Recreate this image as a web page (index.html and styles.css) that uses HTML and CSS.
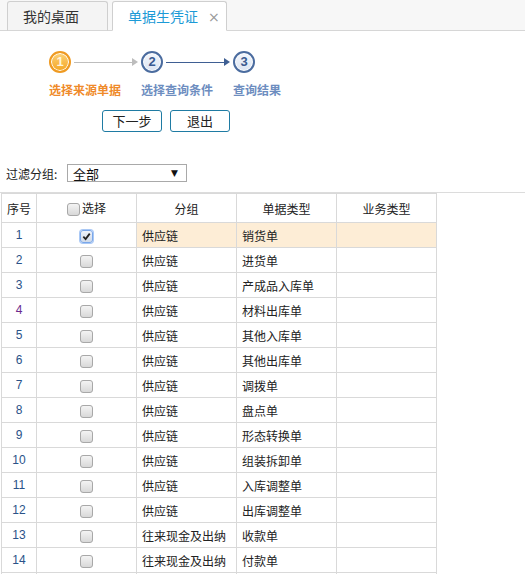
FILE: index.html
```html
<!DOCTYPE html>
<html lang="zh">
<head>
<meta charset="utf-8">
<title>单据生凭证</title>
<link rel="stylesheet" href="styles.css">
</head>
<body>
<div class="tabbar">
  <div class="tab">我的桌面</div>
  <div class="tab active">单据生凭证<span class="close">×</span></div>
</div>

<div class="steps">
  <div class="step">
    <div class="step-top">
      <span class="circle done">1</span>
      <span class="arrow gray"></span>
    </div>
    <div class="label orange">选择来源单据</div>
  </div>
  <div class="step">
    <div class="step-top">
      <span class="circle">2</span>
      <span class="arrow blue"></span>
    </div>
    <div class="label">选择查询条件</div>
  </div>
  <div class="step">
    <div class="step-top">
      <span class="circle">3</span>
    </div>
    <div class="label">查询结果</div>
  </div>
</div>

<div class="actions">
  <button class="btn">下一步</button>
  <button class="btn">退出</button>
</div>

<div class="filter">
  <span class="filter-label">过滤分组:</span>
  <div class="select"><span>全部</span><span class="caret">▼</span></div>
</div>

<div class="grid-wrap">
  <table class="grid">
    <colgroup>
      <col class="c-no">
      <col class="c-sel">
      <col class="c-grp">
      <col class="c-type">
      <col class="c-biz">
    </colgroup>
    <thead>
      <tr>
        <th>序号</th>
        <th><span class="cb"></span>选择</th>
        <th>分组</th>
        <th>单据类型</th>
        <th>业务类型</th>
      </tr>
    </thead>
    <tbody>
      <tr class="selected"><td class="no">1</td><td class="sel"><span class="cb checked"><svg viewBox="0 0 10 10" width="9" height="9"><path d="M1.5 5.2 L4 7.8 L8.6 1.8" fill="none" stroke="#222" stroke-width="2"/></svg></span></td><td class="hl">供应链</td><td class="hl">销货单</td><td class="hl"></td></tr>
      <tr><td class="no">2</td><td class="sel"><span class="cb"></span></td><td>供应链</td><td>进货单</td><td></td></tr>
      <tr><td class="no">3</td><td class="sel"><span class="cb"></span></td><td>供应链</td><td>产成品入库单</td><td></td></tr>
      <tr><td class="no visited">4</td><td class="sel"><span class="cb"></span></td><td>供应链</td><td>材料出库单</td><td></td></tr>
      <tr><td class="no">5</td><td class="sel"><span class="cb"></span></td><td>供应链</td><td>其他入库单</td><td></td></tr>
      <tr><td class="no">6</td><td class="sel"><span class="cb"></span></td><td>供应链</td><td>其他出库单</td><td></td></tr>
      <tr><td class="no">7</td><td class="sel"><span class="cb"></span></td><td>供应链</td><td>调拨单</td><td></td></tr>
      <tr><td class="no">8</td><td class="sel"><span class="cb"></span></td><td>供应链</td><td>盘点单</td><td></td></tr>
      <tr><td class="no">9</td><td class="sel"><span class="cb"></span></td><td>供应链</td><td>形态转换单</td><td></td></tr>
      <tr><td class="no">10</td><td class="sel"><span class="cb"></span></td><td>供应链</td><td>组装拆卸单</td><td></td></tr>
      <tr><td class="no">11</td><td class="sel"><span class="cb"></span></td><td>供应链</td><td>入库调整单</td><td></td></tr>
      <tr><td class="no">12</td><td class="sel"><span class="cb"></span></td><td>供应链</td><td>出库调整单</td><td></td></tr>
      <tr><td class="no">13</td><td class="sel"><span class="cb"></span></td><td>往来现金及出纳</td><td>收款单</td><td></td></tr>
      <tr><td class="no">14</td><td class="sel"><span class="cb"></span></td><td>往来现金及出纳</td><td>付款单</td><td></td></tr>
      <tr><td></td><td></td><td></td><td></td><td></td></tr>
    </tbody>
  </table>
</div>
</body>
</html>
```

FILE: styles.css
```css
html, body {
  margin: 0;
  padding: 0;
  background: #fff;
  font-family: "Liberation Sans", "Noto Sans CJK SC", sans-serif;
  font-size: 12px;
  color: #333;
}

body {
  width: 525px;
  height: 574px;
  overflow: hidden;
}

/* tabs */
.tabbar {
  height: 30px;
  background: #f7f7f7;
  border-bottom: 1px solid #d6d6d6;
  display: flex;
  align-items: flex-end;
  padding-left: 7px;
  gap: 4px;
}

.tab {
  box-sizing: border-box;
  height: 30px;
  margin-bottom: -1px;
  border: 1px solid #cfcfcf;
  border-bottom: 1px solid #d6d6d6;
  border-radius: 3px 3px 0 0;
  background: #f4f4f4;
  font-family: "Noto Sans CJK SC", sans-serif;
  font-size: 14px;
  color: #333;
  line-height: 28px;
  padding: 0 0 0 15px;
  width: 101px;
}

.tab.active {
  background: #fff;
  border-bottom-color: #fff;
  color: #1c9ad6;
  width: 115px;
}

.tab .close {
  color: #999;
  font-family: "DejaVu Sans", sans-serif;
  font-size: 14px;
  margin-left: 10px;
}

/* steps */
.steps {
  display: grid;
  grid-template-columns: 92px 92px 92px;
  padding: 20px 0 0 49px;
}

.step-top {
  display: flex;
  align-items: center;
  height: 22px;
}

.circle {
  box-sizing: border-box;
  width: 22px;
  height: 22px;
  border-radius: 50%;
  border: 2px solid #4b6c9f;
  box-shadow: inset 0 0 0 1px #fff;
  background: linear-gradient(#f4f7fc, #dbe4f2);
  color: #3a5a90;
  font-family: "Liberation Sans", sans-serif;
  font-weight: bold;
  font-size: 13px;
  line-height: 18px;
  text-align: center;
  flex: none;
}

.circle.done {
  border-color: #ef9a22;
  background: linear-gradient(#fcd27a, #f5a623);
  color: #fff4dc;
}

.arrow {
  position: relative;
  display: block;
  height: 1px;
  width: 58px;
  margin-left: 3px;
}

.arrow::after {
  content: "";
  position: absolute;
  right: -6px;
  top: -4px;
  border-left: 6px solid currentColor;
  border-top: 4.5px solid transparent;
  border-bottom: 4.5px solid transparent;
}

.arrow.gray {
  background: #bdbdbd;
  color: #bdbdbd;
}

.arrow.blue {
  background: #3f5f93;
  color: #3f5f93;
}

.label {
  margin-top: 9px;
  font-family: "Noto Sans CJK SC", sans-serif;
  font-weight: bold;
  font-size: 12px;
  line-height: 16px;
  color: #6d8dbf;
  white-space: nowrap;
}

.label.orange {
  color: #ef8a2a;
}

/* buttons */
.actions {
  display: flex;
  gap: 8px;
  padding: 12px 0 0 102px;
}

.btn {
  box-sizing: border-box;
  width: 60px;
  height: 22px;
  border: 1px solid #1f7ba3;
  border-radius: 3px;
  background: #fff;
  font-family: "Noto Sans CJK SC", sans-serif;
  font-size: 13px;
  color: #222;
  padding: 0;
  line-height: 20px;
}

/* filter */
.filter {
  display: flex;
  align-items: center;
  padding: 32px 0 0 6px;
  height: 18px;
}

.filter-label {
  font-family: "Noto Sans CJK SC", sans-serif;
  font-size: 12px;
  color: #222;
  width: 61px;
}

.select {
  box-sizing: border-box;
  width: 120px;
  height: 18px;
  border: 1px solid #a9a9a9;
  display: flex;
  align-items: center;
  justify-content: space-between;
  padding: 0 8px 0 5px;
  font-family: "Noto Sans CJK SC", sans-serif;
  font-size: 13px;
  color: #111;
}

.select .caret {
  font-family: "DejaVu Sans", sans-serif;
  font-size: 9px;
  color: #111;
}

/* grid */
.grid-wrap {
  margin-top: 10px;
  border-top: 1px solid #dcdcdc;
  padding-left: 1px;
}

.grid {
  border-collapse: collapse;
  table-layout: fixed;
  width: 435px;
  font-family: "Noto Sans CJK SC", sans-serif;
  font-size: 12px;
  color: #222;
}

.c-no { width: 35px; }
.c-sel { width: 100px; }
.c-grp { width: 100px; }
.c-type { width: 100px; }
.c-biz { width: 100px; }

.grid th, .grid td {
  border: 1px solid #d9d9d9;
  padding: 0 0 0 5px;
  white-space: nowrap;
  overflow: hidden;
}

.grid th {
  height: 28px;
  font-weight: normal;
  text-align: center;
  padding: 0;
}

.grid td {
  height: 24px;
  text-align: left;
}

.grid td.no {
  text-align: center;
  padding: 0;
  font-family: "Liberation Sans", sans-serif;
  color: #2a5288;
}

.grid td.no.visited {
  color: #6a2b8e;
}

.grid td.sel {
  text-align: center;
  padding: 0;
}

.grid td.hl {
  background: #fdedd6;
}

.cb {
  box-sizing: border-box;
  display: inline-block;
  width: 13px;
  height: 13px;
  border: 1px solid #a8a8a8;
  border-radius: 3px;
  background: linear-gradient(#f4f4f4, #d8d8d8);
  vertical-align: middle;
  position: relative;
  top: -1px;
}

th .cb {
  margin-right: 2px;
}

.cb.checked {
  border-color: #7aa7ea;
  box-shadow: 0 0 0 1px #a9c8f5;
  background: linear-gradient(#eef3fb, #cfd9e8);
}

.cb svg {
  display: block;
  margin: 1px 0 0 1px;
}
```
